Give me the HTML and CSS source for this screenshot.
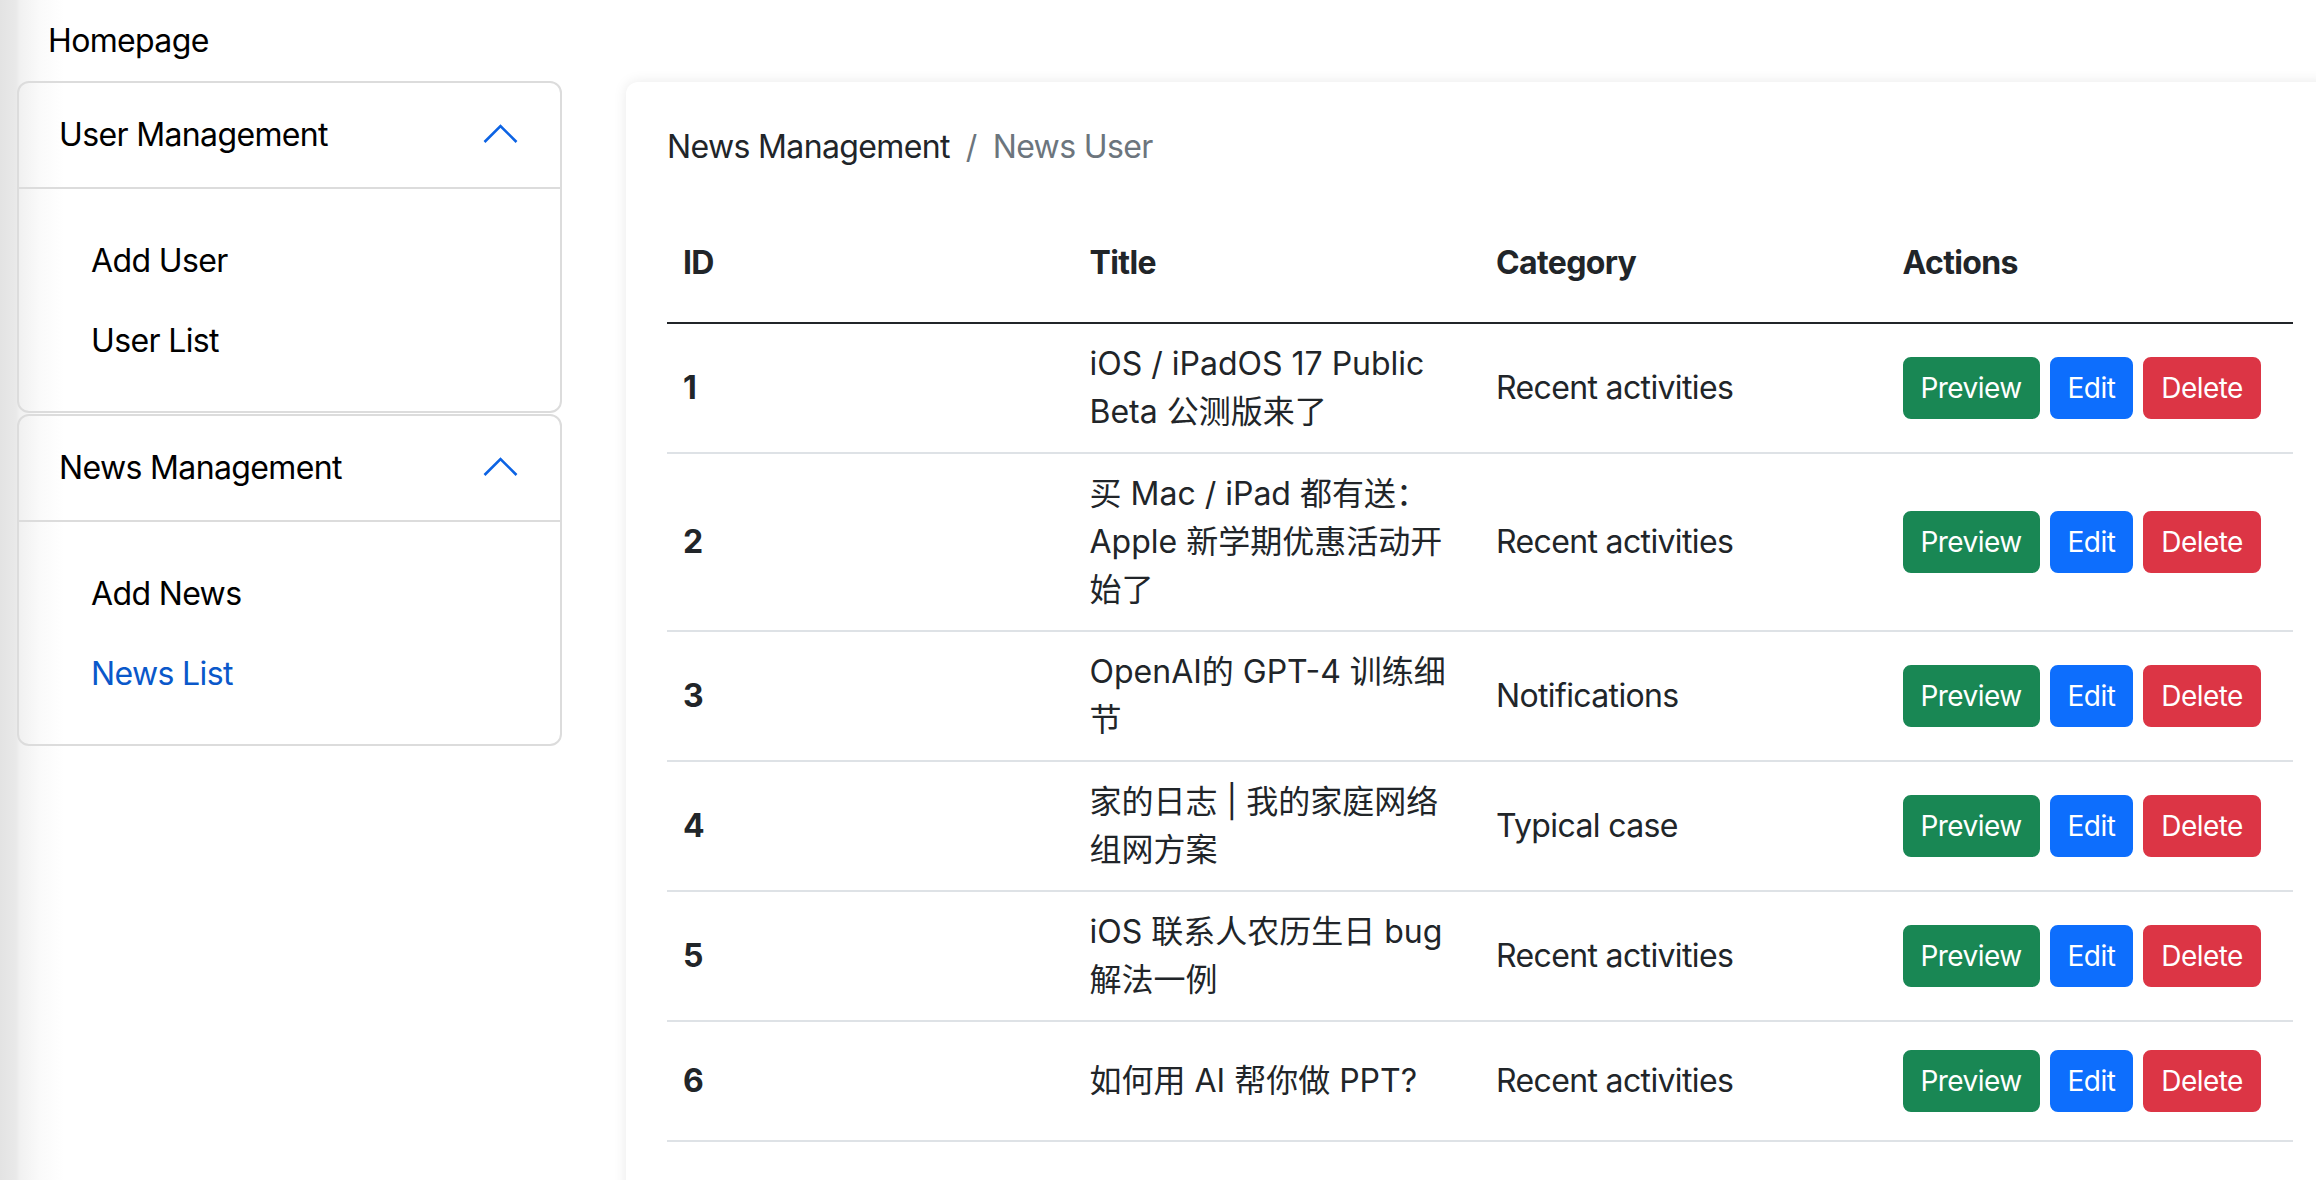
FILE: index.html
```html
<!DOCTYPE html>
<html lang="en">
<head>
<meta charset="utf-8">
<title>News Management</title>
<link rel="stylesheet" href="styles.css">
</head>
<body>
<div class="layout">
  <aside class="sidebar">
    <a class="home-link" href="#">Homepage</a>
    <div class="acc">
      <div class="acc-head">
        <span>User Management</span>
        <svg class="chev" width="40" height="40" viewBox="0 0 40 40"><path d="M4.5 27 L20.5 11 L36.5 27" fill="none" stroke="#0c63e4" stroke-width="2.6"/></svg>
      </div>
      <div class="acc-body">
        <a class="nav-link" href="#">Add User</a>
        <a class="nav-link" href="#">User List</a>
      </div>
    </div>
    <div class="acc">
      <div class="acc-head">
        <span>News Management</span>
        <svg class="chev" width="40" height="40" viewBox="0 0 40 40"><path d="M4.5 27 L20.5 11 L36.5 27" fill="none" stroke="#0c63e4" stroke-width="2.6"/></svg>
      </div>
      <div class="acc-body">
        <a class="nav-link" href="#">Add News</a>
        <a class="nav-link active" href="#">News List</a>
      </div>
    </div>
  </aside>

  <main class="panel">
    <nav class="crumbs">
      <span class="crumb">News Management</span>
      <span class="crumb-sep">/</span>
      <span class="crumb current">News User</span>
    </nav>
    <table class="news-table">
      <thead>
        <tr><th>ID</th><th>Title</th><th>Category</th><th>Actions</th></tr>
      </thead>
      <tbody>
        <tr>
          <th>1</th>
          <td class="title">iOS / iPadOS 17 Public Beta 公测版来了</td>
          <td>Recent activities</td>
          <td><div class="btn-row"><button class="btn btn-green">Preview</button><button class="btn btn-blue">Edit</button><button class="btn btn-red">Delete</button></div></td>
        </tr>
        <tr>
          <th>2</th>
          <td class="title">买 Mac / iPad 都有送：Apple 新学期优惠活动开始了</td>
          <td>Recent activities</td>
          <td><div class="btn-row"><button class="btn btn-green">Preview</button><button class="btn btn-blue">Edit</button><button class="btn btn-red">Delete</button></div></td>
        </tr>
        <tr>
          <th>3</th>
          <td class="title">OpenAI的 GPT-4 训练细节</td>
          <td>Notifications</td>
          <td><div class="btn-row"><button class="btn btn-green">Preview</button><button class="btn btn-blue">Edit</button><button class="btn btn-red">Delete</button></div></td>
        </tr>
        <tr>
          <th>4</th>
          <td class="title">家的日志 | 我的家庭网络组网方案</td>
          <td>Typical case</td>
          <td><div class="btn-row"><button class="btn btn-green">Preview</button><button class="btn btn-blue">Edit</button><button class="btn btn-red">Delete</button></div></td>
        </tr>
        <tr>
          <th>5</th>
          <td class="title">iOS 联系人农历生日 bug 解法一例</td>
          <td>Recent activities</td>
          <td><div class="btn-row"><button class="btn btn-green">Preview</button><button class="btn btn-blue">Edit</button><button class="btn btn-red">Delete</button></div></td>
        </tr>
        <tr>
          <th>6</th>
          <td class="title">如何用 AI 帮你做 PPT?</td>
          <td>Recent activities</td>
          <td><div class="btn-row"><button class="btn btn-green">Preview</button><button class="btn btn-blue">Edit</button><button class="btn btn-red">Delete</button></div></td>
        </tr>
      </tbody>
    </table>
  </main>
</div>
</body>
</html>
```

FILE: styles.css
```css
* {
  box-sizing: border-box;
}

html, body {
  margin: 0;
  padding: 0;
  overflow: hidden;
}

body {
  font-family: Inter, "Noto Sans CJK SC", sans-serif;
  font-size: 32px;
  line-height: 48px;
  letter-spacing: -0.02em;
  color: #212529;
  background: linear-gradient(to right, #e3e3e3 0px, #e9e9e9 16px, #f1f1f1 20px, #fafafa 40px, #ffffff 64px);
  height: 1180px;
}

.layout {
  display: grid;
  grid-template-columns: 545px 1708px;
  column-gap: 64px;
  padding-left: 17px;
  align-items: start;
}

/* Sidebar */
.sidebar {
  display: flex;
  flex-direction: column;
  gap: 1px;
}

.home-link {
  display: block;
  padding: 17px 0 15px 31px;
  color: #000;
  text-decoration: none;
}

.acc {
  border: 2px solid #dcdcdc;
  border-radius: 12px;
}

.acc-head {
  display: flex;
  align-items: center;
  justify-content: space-between;
  padding: 28px 40px;
  border-bottom: 2px solid #dcdcdc;
  color: #000;
}

.chev {
  display: block;
  flex: none;
}

.acc-body {
  display: flex;
  flex-direction: column;
  padding: 32px 40px 30px;
}

.nav-link {
  display: block;
  padding: 16px 32px;
  color: #000;
  text-decoration: none;
}

.nav-link.active {
  color: #0a58ca;
}

/* Main panel */
.panel {
  margin-top: 82px;
  background: #fff;
  border-radius: 12px;
  padding: 41px;
  box-shadow: 0 0 14px rgba(0, 0, 0, 0.09);
  min-height: 1120px;
}

.crumbs {
  display: flex;
  align-items: baseline;
  margin-bottom: 32px;
  color: #212529;
}

.crumb-sep {
  color: #6c757d;
  padding: 0 16px;
}

.crumb.current {
  color: #6c757d;
}

.news-table {
  width: 100%;
  border-collapse: collapse;
  table-layout: fixed;
}

.news-table th,
.news-table td {
  padding: 16px;
  height: 120px;
  vertical-align: middle;
  text-align: left;
  border-bottom: 2px solid #dee2e6;
  color: #212529;
}

.news-table td.title {
  letter-spacing: 0;
}

.news-table th {
  font-weight: 700;
}

.news-table thead th {
  border-bottom-color: #212529;
}

.btn-row {
  display: flex;
  gap: 10px;
}

.btn {
  font-family: Inter, "Noto Sans CJK SC", sans-serif;
  font-size: 28px;
  line-height: 42px;
  letter-spacing: -0.02em;
  padding: 8px 16px;
  border: 2px solid transparent;
  border-radius: 8px;
  color: #fff;
  cursor: pointer;
}

.btn-green {
  background: #198754;
  border-color: #198754;
}

.btn-blue {
  background: #0d6efd;
  border-color: #0d6efd;
}

.btn-red {
  background: #dc3545;
  border-color: #dc3545;
}
```
